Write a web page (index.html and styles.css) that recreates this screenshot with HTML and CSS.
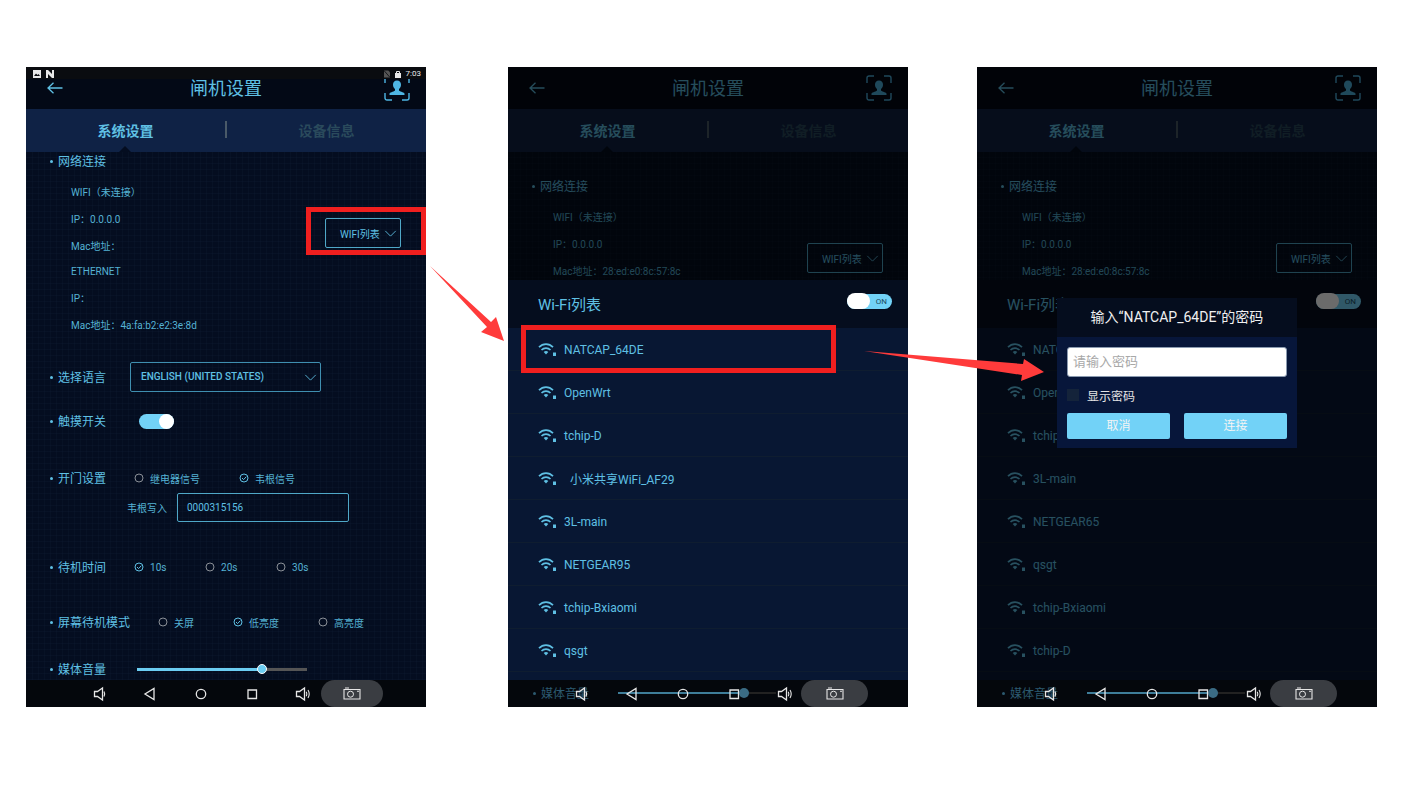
FILE: index.html
```html
<!DOCTYPE html>
<html lang="en">
<head>
  <meta charset="UTF-8">
  <title>闸机设置</title>
  <link rel="stylesheet" href="styles.css">
</head>
<body>

<!-- shared icons -->
<svg class="sprite" width="0" height="0">
  <symbol id="i-back" viewBox="0 0 16 12">
    <path d="M15.5 6H1M6.5 .8 1 6l5.5 5.2" fill="none" stroke="currentColor" stroke-width="1.3"/>
  </symbol>
  <symbol id="i-face" viewBox="0 0 26 26">
    <path d="M1 8V3a2 2 0 0 1 2-2h5M18 1h5a2 2 0 0 1 2 2v5M25 18v5a2 2 0 0 1-2 2h-5M8 25H3a2 2 0 0 1-2-2v-5" fill="none" stroke="currentColor" stroke-width="1.4"/>
    <path d="M13 5.500c2.600 0 4 1.900 4 4.200 0 2-.9 3.500-2 4.400v1.300c0 .8 4.800 1.500 5.500 3.100v1.500h-15v-1.500c.7-1.600 5.500-2.300 5.500-3.100v-1.300c-1.100-.9-2-2.400-2-4.400 0-2.300 1.400-4.200 4-4.200z" fill="currentColor"/>
  </symbol>
  <symbol id="i-chev" viewBox="0 0 14 8">
    <path d="M1 1l6 6 6-6" fill="none" stroke="currentColor" stroke-width="1"/>
  </symbol>
  <symbol id="i-wifi" viewBox="0 0 18 14">
    <path d="M1 5.200C5 1 11 1 15 5.200M3.500 8C6 5.600 10 5.600 12.500 8" fill="none" stroke="currentColor" stroke-width="1.700"/>
    <path d="M5.700 10c1.500-1.300 3.100-1.300 4.600 0L8 12.600z" fill="currentColor"/>
    <path d="M15 10.500h3V14h-3z" fill="currentColor"/>
  </symbol>
  <symbol id="i-off" viewBox="0 0 10 10">
    <circle cx="5" cy="5" r="4" fill="none" stroke="currentColor"/>
  </symbol>
  <symbol id="i-on" viewBox="0 0 10 10">
    <circle cx="5" cy="5" r="4" fill="none" stroke="currentColor"/>
    <path d="M3 5l1.600 1.600L7.300 3.700" fill="none" stroke="currentColor"/>
  </symbol>
  <symbol id="i-vol" viewBox="0 0 18 16">
    <path d="M4.500 5.500h3l5-3.500v12l-5-3.500h-3z" fill="none" stroke="currentColor" stroke-width="1.300"/>
    <path d="M14 5.500c.8 1.500.8 3.500 0 5" fill="none" stroke="currentColor" stroke-width="1.200"/>
  </symbol>
  <symbol id="i-vol-up" viewBox="0 0 18 16">
    <path d="M2.500 5.500h3l5-3.500v12l-5-3.500h-3z" fill="none" stroke="currentColor" stroke-width="1.300"/>
    <path d="M12.300 5.800c.7 1.400.7 3 0 4.400M14 4c1.500 2.500 1.500 5.500 0 8" fill="none" stroke="currentColor" stroke-width="1.100"/>
  </symbol>
  <symbol id="i-nav-back" viewBox="0 0 18 16">
    <path d="M13 2.500v11L4 8z" fill="none" stroke="currentColor" stroke-width="1.300"/>
  </symbol>
  <symbol id="i-nav-home" viewBox="0 0 18 16">
    <circle cx="9" cy="8" r="4.700" fill="none" stroke="currentColor" stroke-width="1.300"/>
  </symbol>
  <symbol id="i-nav-recent" viewBox="0 0 18 16">
    <path d="M5 4h8.500v8.500H5z" fill="none" stroke="currentColor" stroke-width="1.300"/>
  </symbol>
  <symbol id="i-shot" viewBox="0 0 18 13">
    <path d="M1 2.500h16v9.500H1z" fill="none" stroke="currentColor" stroke-width="1.100"/>
    <circle cx="7.500" cy="7.200" r="3" fill="none" stroke="currentColor"/>
    <path d="M2 1h4M14 4.200h2" stroke="currentColor" stroke-width="1.100"/>
  </symbol>
  <symbol id="i-pic" viewBox="0 0 8 8">
    <path d="M0 0h8v8H0z" fill="currentColor"/>
    <path d="M1 6l2-2.500L4.500 5 5.500 4 7 6z" fill="#0a0c10"/>
  </symbol>
  <symbol id="i-n" viewBox="0 0 8 8">
    <path d="M0 0h2l4 4V0h2v8H6L2 4v4H0z" fill="currentColor"/>
  </symbol>
  <symbol id="i-lock" viewBox="0 0 6 8">
    <path d="M0 3h6v5H0z" fill="currentColor"/>
    <path d="M1.500 3V1.500h3V3" fill="none" stroke="currentColor"/>
  </symbol>
  <symbol id="i-sim" viewBox="0 0 7 8">
    <path d="M0 0h5l2 2v6H0z" fill="currentColor"/>
    <path d="M0 0l7 8" stroke="#0a0c10"/>
  </symbol>
</svg>

<main class="screens">

  <!-- settings page -->
  <section class="phone">
    <div class="statusbar">
      <div class="status-left">
        <svg class="status-icon"><use href="#i-pic"/></svg>
        <svg class="status-icon"><use href="#i-n"/></svg>
      </div>
      <div class="status-right">
        <svg class="status-icon status-icon--sim"><use href="#i-sim"/></svg>
        <svg class="status-icon status-icon--lock"><use href="#i-lock"/></svg>
        <span>7:03</span>
      </div>
    </div>
    <header class="appbar">
      <svg class="appbar-back"><use href="#i-back"/></svg>
      <h1 class="appbar-title">闸机设置</h1>
      <svg class="appbar-face"><use href="#i-face"/></svg>
    </header>
    <nav class="tabs">
      <span class="tab tab--active">系统设置</span>
      <span class="tab-sep"></span>
      <span class="tab">设备信息</span>
    </nav>
    <div class="content">
      <div class="label">网络连接</div>
      <div class="network">
        <div class="details">
          <div class="detail-group">
            <div class="detail">WIFI（未连接）</div>
            <div class="detail">IP：0.0.0.0</div>
            <div class="detail">Mac地址：</div>
          </div>
          <div class="detail-group">
            <div class="detail">ETHERNET</div>
            <div class="detail">IP：</div>
            <div class="detail">Mac地址：4a:fa:b2:e2:3e:8d</div>
          </div>
        </div>
        <div class="wifi-btn">WIFI列表<svg class="chev"><use href="#i-chev"/></svg></div>
      </div>

      <div class="row row--lang">
        <div class="label">选择语言</div>
        <div class="select">ENGLISH (UNITED STATES)<svg class="chev chev--select"><use href="#i-chev"/></svg></div>
      </div>

      <div class="row row--touch">
        <div class="label">触摸开关</div>
        <div class="toggle"><span class="toggle-knob"></span></div>
      </div>

      <div class="row row--door">
        <div class="label">开门设置</div>
        <div class="radio radio--door"><svg class="radio-icon radio-icon--off"><use href="#i-off"/></svg>继电器信号</div>
        <div class="radio"><svg class="radio-icon"><use href="#i-on"/></svg>韦根信号</div>
      </div>
      <div class="wiegand">
        <span class="wiegand-label">韦根写入</span>
        <div class="wiegand-input">0000315156</div>
      </div>

      <div class="row row--time">
        <div class="label">待机时间</div>
        <div class="radio radio--time"><svg class="radio-icon"><use href="#i-on"/></svg>10s</div>
        <div class="radio radio--time"><svg class="radio-icon radio-icon--off"><use href="#i-off"/></svg>20s</div>
        <div class="radio radio--time"><svg class="radio-icon radio-icon--off"><use href="#i-off"/></svg>30s</div>
      </div>

      <div class="row row--mode">
        <div class="label">屏幕待机模式</div>
        <div class="radio radio--mode"><svg class="radio-icon radio-icon--off"><use href="#i-off"/></svg>关屏</div>
        <div class="radio radio--mode-wide"><svg class="radio-icon"><use href="#i-on"/></svg>低亮度</div>
        <div class="radio"><svg class="radio-icon radio-icon--off"><use href="#i-off"/></svg>高亮度</div>
      </div>

      <div class="row row--volume">
        <div class="label">媒体音量</div>
        <div class="slider"><span class="slider-fill"></span><span class="slider-knob"></span></div>
      </div>
    </div>
    <footer class="navbar">
      <svg class="nav-icon"><use href="#i-vol"/></svg>
      <svg class="nav-icon"><use href="#i-nav-back"/></svg>
      <svg class="nav-icon"><use href="#i-nav-home"/></svg>
      <svg class="nav-icon"><use href="#i-nav-recent"/></svg>
      <svg class="nav-icon"><use href="#i-vol-up"/></svg>
      <div class="shot shot--narrow"><svg class="shot-icon"><use href="#i-shot"/></svg></div>
    </footer>
  </section>

  <!-- wifi list -->
  <section class="phone phone--mid">
    <header class="appbar">
      <svg class="appbar-back"><use href="#i-back"/></svg>
      <h1 class="appbar-title">闸机设置</h1>
      <svg class="appbar-face"><use href="#i-face"/></svg>
    </header>
    <nav class="tabs">
      <span class="tab tab--active">系统设置</span>
      <span class="tab-sep"></span>
      <span class="tab">设备信息</span>
    </nav>
    <div class="content content--behind">
      <div class="label">网络连接</div>
      <div class="network">
        <div class="details">
          <div class="detail-group">
            <div class="detail">WIFI（未连接）</div>
            <div class="detail">IP：0.0.0.0</div>
            <div class="detail">Mac地址：28:ed:e0:8c:57:8c</div>
          </div>
        </div>
        <div class="wifi-btn">WIFI列表<svg class="chev"><use href="#i-chev"/></svg></div>
      </div>
    </div>
    <div class="scrim"></div>
    <div class="sheet">
      <div class="sheet-head">
        <span class="sheet-title">Wi-Fi列表</span>
        <div class="switch"><span class="switch-knob"></span><span class="switch-text">ON</span></div>
      </div>
      <ul class="ap-list">
        <li class="ap"><svg class="ap-icon"><use href="#i-wifi"/></svg>NATCAP_64DE</li>
        <li class="ap"><svg class="ap-icon"><use href="#i-wifi"/></svg>OpenWrt</li>
        <li class="ap"><svg class="ap-icon"><use href="#i-wifi"/></svg>tchip-D</li>
        <li class="ap ap--indent"><svg class="ap-icon"><use href="#i-wifi"/></svg>小米共享WiFi_AF29</li>
        <li class="ap"><svg class="ap-icon"><use href="#i-wifi"/></svg>3L-main</li>
        <li class="ap"><svg class="ap-icon"><use href="#i-wifi"/></svg>NETGEAR95</li>
        <li class="ap"><svg class="ap-icon"><use href="#i-wifi"/></svg>tchip-Bxiaomi</li>
        <li class="ap"><svg class="ap-icon"><use href="#i-wifi"/></svg>qsgt</li>
      </ul>
    </div>
    <footer class="navbar">
      <div class="peek">
        <div class="label">媒体音量</div>
        <div class="slider slider--peek"><span class="slider-fill"></span><span class="slider-knob"></span></div>
      </div>
      <svg class="nav-icon"><use href="#i-vol"/></svg>
      <svg class="nav-icon"><use href="#i-nav-back"/></svg>
      <svg class="nav-icon"><use href="#i-nav-home"/></svg>
      <svg class="nav-icon"><use href="#i-nav-recent"/></svg>
      <svg class="nav-icon"><use href="#i-vol-up"/></svg>
      <div class="shot"><svg class="shot-icon"><use href="#i-shot"/></svg></div>
    </footer>
  </section>

  <!-- password dialog -->
  <section class="phone">
    <header class="appbar">
      <svg class="appbar-back"><use href="#i-back"/></svg>
      <h1 class="appbar-title">闸机设置</h1>
      <svg class="appbar-face"><use href="#i-face"/></svg>
    </header>
    <nav class="tabs">
      <span class="tab tab--active">系统设置</span>
      <span class="tab-sep"></span>
      <span class="tab">设备信息</span>
    </nav>
    <div class="content content--behind">
      <div class="label">网络连接</div>
      <div class="network">
        <div class="details">
          <div class="detail-group">
            <div class="detail">WIFI（未连接）</div>
            <div class="detail">IP：0.0.0.0</div>
            <div class="detail">Mac地址：28:ed:e0:8c:57:8c</div>
          </div>
        </div>
        <div class="wifi-btn">WIFI列表<svg class="chev"><use href="#i-chev"/></svg></div>
      </div>
    </div>
    <div class="scrim"></div>
    <div class="sheet sheet--dim">
      <div class="sheet-head">
        <span class="sheet-title">Wi-Fi列表</span>
        <div class="switch"><span class="switch-knob"></span><span class="switch-text">ON</span></div>
      </div>
      <ul class="ap-list">
        <li class="ap"><svg class="ap-icon"><use href="#i-wifi"/></svg>NATCAP_64DE</li>
        <li class="ap"><svg class="ap-icon"><use href="#i-wifi"/></svg>OpenWrt</li>
        <li class="ap"><svg class="ap-icon"><use href="#i-wifi"/></svg>tchip-D</li>
        <li class="ap"><svg class="ap-icon"><use href="#i-wifi"/></svg>3L-main</li>
        <li class="ap"><svg class="ap-icon"><use href="#i-wifi"/></svg>NETGEAR65</li>
        <li class="ap"><svg class="ap-icon"><use href="#i-wifi"/></svg>qsgt</li>
        <li class="ap"><svg class="ap-icon"><use href="#i-wifi"/></svg>tchip-Bxiaomi</li>
        <li class="ap"><svg class="ap-icon"><use href="#i-wifi"/></svg>tchip-D</li>
      </ul>
    </div>
    <div class="dialog">
      <div class="dialog-head">输入“NATCAP_64DE”的密码</div>
      <div class="dialog-body">
        <div class="pass-input">请输入密码</div>
        <div class="show-pass"><span class="checkbox"></span>显示密码</div>
        <div class="dialog-btns">
          <div class="dialog-btn">取消</div>
          <div class="dialog-btn">连接</div>
        </div>
      </div>
    </div>
    <footer class="navbar">
      <div class="peek">
        <div class="label">媒体音量</div>
        <div class="slider slider--peek"><span class="slider-fill"></span><span class="slider-knob"></span></div>
      </div>
      <svg class="nav-icon"><use href="#i-vol"/></svg>
      <svg class="nav-icon"><use href="#i-nav-back"/></svg>
      <svg class="nav-icon"><use href="#i-nav-home"/></svg>
      <svg class="nav-icon"><use href="#i-nav-recent"/></svg>
      <svg class="nav-icon"><use href="#i-vol-up"/></svg>
      <div class="shot"><svg class="shot-icon"><use href="#i-shot"/></svg></div>
    </footer>
  </section>

</main>

<!-- red callouts drawn over the screenshots -->
<svg class="callouts" viewBox="0 0 1415 785">
  <rect class="callout-box" x="308.500" y="209.500" width="115" height="43"/>
  <rect class="callout-box" x="523.500" y="327.500" width="310" height="43"/>
  <polygon class="callout-arrow" points="430,266 491,322 496,317 504,341 481,332 487,327"/>
  <polygon class="callout-arrow" points="864,351 1023,364 1024,359 1044,372 1021,381 1022,375"/>
</svg>

</body>
</html>
```

FILE: styles.css
```css
* {
  box-sizing: border-box;
}

body {
  margin: 0;
  background: #fff;
  font-family: Roboto, "Noto Sans CJK SC", sans-serif;
  color: #5fc0e4;
}

.sprite {
  position: absolute;
}

.screens {
  display: flex;
  padding: 67px 0 0 26px;
}

/* Phone frame */
.phone {
  position: relative;
  display: flex;
  flex-direction: column;
  width: 400px;
  height: 640px;
  overflow: hidden;
  background-color: #040d20;
  background-image:
    linear-gradient(rgba(90, 140, 180, .035) 1px, transparent 1px),
    linear-gradient(90deg, rgba(90, 140, 180, .035) 1px, transparent 1px);
  background-size: 6px 6px;
}

.phone--mid {
  margin: 0 69px 0 82px;
}

/* Status bar */
.statusbar {
  position: absolute;
  top: 0;
  left: 0;
  right: 0;
  height: 12px;
  display: flex;
  justify-content: space-between;
  padding: 2px 5px 0 7px;
  background: #0a0c10;
  color: #e8e8e8;
  font-size: 8px;
  line-height: 10px;
  z-index: 2;
}

.status-left, .status-right {
  display: flex;
  align-items: center;
}

.status-left {
  gap: 5px;
}

.status-icon {
  width: 8px;
  height: 8px;
}

.status-icon--sim {
  width: 6px;
  color: #555;
  margin-right: 5px;
}

.status-icon--lock {
  width: 6px;
  margin-right: 5px;
}

/* App bar */
.appbar {
  position: relative;
  flex: none;
  height: 42px;
  display: flex;
  align-items: center;
  justify-content: center;
  padding-bottom: 2px;
  background: #030916;
}

.appbar-back {
  position: absolute;
  left: 21px;
  top: 15px;
  width: 16px;
  height: 12px;
  color: #5fc0e4;
}

.appbar-title {
  margin: 0;
  font-size: 18px;
  font-weight: 400;
  color: #5fc0e4;
}

.appbar-face {
  position: absolute;
  left: 358px;
  top: 8px;
  width: 26px;
  height: 26px;
  color: #4fb6e4;
}

/* Tabs */
.tabs {
  position: relative;
  flex: none;
  height: 43px;
  display: flex;
  align-items: center;
  padding-bottom: 2px;
  background: #0f2245;
}

.tabs::after {
  content: "";
  position: absolute;
  left: 93px;
  bottom: 0;
  border: 6px solid transparent;
  border-top: 0;
  border-bottom-color: #040d20;
}

.tab {
  flex: 1;
  text-align: center;
  font-size: 14px;
  font-weight: 700;
  color: #2a4a5c;
}

.tab--active {
  color: #5fc0e4;
}

.tab-sep {
  width: 2px;
  height: 17px;
  background: #4a5a68;
}

/* Settings content */
.content {
  flex: 1;
  min-height: 0;
  padding-left: 32px;
}

.content--behind {
  padding-top: 25px;
}

.label {
  position: relative;
  top: 1px;
  flex: none;
  font-size: 12px;
  line-height: 18px;
  color: #5fc0e4;
}

.label::before {
  content: "";
  position: absolute;
  left: -8px;
  top: 7px;
  width: 3px;
  height: 3px;
  border-radius: 50%;
  background: #5fc0e4;
}

.network {
  display: flex;
  justify-content: space-between;
  margin-top: 10px;
  padding: 0 25px 0 13px;
}

.detail-group {
  display: flex;
  flex-direction: column;
  gap: 2px;
}

.detail {
  height: 25px;
  font-size: 10px;
  line-height: 25px;
  color: #55b2d4;
}

.wifi-btn {
  flex: none;
  display: flex;
  align-items: center;
  gap: 4px;
  width: 76px;
  height: 30px;
  margin-top: 38px;
  padding-left: 14px;
  border: 1px solid #4fa8c8;
  border-radius: 2px;
  font-size: 10px;
  color: #5fc0e4;
}

.chev {
  flex: none;
  width: 13px;
  height: 7px;
}

.chev--select {
  position: absolute;
  right: 3px;
  top: 11px;
}

.row {
  display: flex;
  align-items: center;
}

.row--lang {
  margin-top: 24px;
}

.select {
  position: relative;
  width: 191px;
  height: 30px;
  margin-left: 24px;
  padding-left: 10px;
  border: 1px solid #3f8fb0;
  border-radius: 2px;
  font-size: 10px;
  font-weight: 500;
  line-height: 28px;
  color: #5fc0e4;
}

.row--touch {
  height: 30px;
  margin-top: 14px;
}

.toggle {
  display: flex;
  justify-content: flex-end;
  width: 35px;
  height: 15px;
  margin-left: 33px;
  border-radius: 8px;
  background: #72d2f7;
}

.toggle-knob {
  width: 15px;
  height: 15px;
  border-radius: 50%;
  background: #fff;
}

.row--door {
  margin-top: 33px;
}

.radio {
  display: flex;
  align-items: center;
  gap: 6px;
  font-size: 10px;
  color: #55b2d4;
}

.radio-icon {
  width: 10px;
  height: 10px;
  color: #5fc0e4;
}

.radio-icon--off {
  color: #8a8f96;
}

.radio--door {
  width: 105px;
  margin-left: 28px;
}

.wiegand {
  display: flex;
  align-items: center;
  gap: 10px;
  margin-top: 6px;
  padding-left: 69px;
}

.wiegand-label {
  font-size: 10px;
  color: #55b2d4;
}

.wiegand-input {
  width: 172px;
  height: 29px;
  padding-left: 9px;
  border: 1px solid #4fa8c8;
  border-radius: 2px;
  font-size: 10px;
  line-height: 27px;
  color: #5fc0e4;
}

.row--time {
  margin-top: 36px;
}

.radio--time {
  width: 71px;
}

.radio--time:nth-child(2) {
  margin-left: 28px;
}

.row--mode {
  margin-top: 37px;
}

.radio--mode {
  width: 75px;
  margin-left: 28px;
}

.radio--mode-wide {
  width: 85px;
}

.row--volume {
  margin-top: 29px;
}

.slider {
  position: relative;
  width: 170px;
  height: 3px;
  margin-left: 31px;
  background: #555;
}

.slider-fill {
  display: block;
  width: 125px;
  height: 3px;
  background: #6bcdf2;
}

.slider-knob {
  position: absolute;
  left: 120px;
  top: -3.500px;
  width: 10px;
  height: 10px;
  border: 1.500px solid #fff;
  border-radius: 50%;
  background: #6bcdf2;
}

/* Bottom nav */
.navbar {
  position: absolute;
  left: 0;
  right: 0;
  bottom: 0;
  height: 27px;
  display: flex;
  align-items: center;
  gap: 33px;
  padding-left: 64px;
  background: #04070c;
  z-index: 3;
}

.nav-icon {
  position: relative;
  flex: none;
  width: 18px;
  height: 16px;
  color: #e6e6e6;
}

.shot {
  position: relative;
  flex: none;
  display: flex;
  align-items: center;
  justify-content: center;
  width: 67px;
  height: 27px;
  margin-left: -26px;
  border-radius: 14px;
  background: #3a3d42;
  color: #e6e6e6;
}

.shot--narrow {
  width: 62px;
  margin-left: -24px;
}

.shot-icon {
  width: 18px;
  height: 13px;
}

.peek {
  position: absolute;
  left: 33px;
  top: 4px;
  display: flex;
  align-items: center;
}

.peek .label {
  color: #2c5a70;
}

.peek .label::before {
  background: #2c5a70;
}

.slider--peek {
  width: 158px;
  height: 2px;
  margin-left: 29px;
  background: #222;
}

.slider--peek .slider-fill {
  width: 121px;
  height: 2px;
  background: #3e7d99;
}

.slider--peek .slider-knob {
  left: 121px;
  top: -4px;
  border: 0;
  background: #3a6b84;
}

/* Dimmed layer behind the sheet */
.scrim {
  position: absolute;
  inset: 0;
  background: rgba(0, 0, 0, .6);
}

/* Wi-Fi list sheet */
.sheet {
  position: absolute;
  left: 0;
  right: 0;
  top: 213px;
  bottom: 0;
}

.sheet--dim::after {
  content: "";
  position: absolute;
  inset: 0;
  background: rgba(0, 0, 0, .58);
}

.sheet-head {
  height: 48px;
  display: flex;
  align-items: center;
  justify-content: space-between;
  padding: 0 16px 2px 30px;
  background: #050d1e;
}

.sheet-title {
  font-size: 15px;
  color: #5fc0e4;
}

.switch {
  position: relative;
  width: 45px;
  height: 15px;
  margin-top: -3px;
  padding-right: 5px;
  border-radius: 8px;
  background: #72d2f7;
  text-align: right;
}

.switch-knob {
  position: absolute;
  left: 0;
  top: -1px;
  width: 23px;
  height: 16px;
  border-radius: 8px;
  background: #fff;
}

.switch-text {
  display: block;
  font-size: 8px;
  line-height: 15px;
  color: #1d4b60;
}

.ap-list {
  margin: 0;
  padding: 0;
  list-style: none;
  background: #081733;
  height: 352px;
}

.ap {
  display: flex;
  align-items: center;
  gap: 8px;
  height: 43px;
  padding: 1px 0 0 30px;
  border-bottom: 1px solid #0f1d30;
  font-size: 12px;
  color: #5fc0e4;
}

.ap--indent {
  gap: 14px;
}

.ap-icon {
  flex: none;
  width: 18px;
  height: 14px;
  margin-top: -1px;
  color: #5fc0e4;
}

/* Password dialog */
.dialog {
  position: absolute;
  left: 80px;
  top: 231px;
  width: 240px;
  height: 150px;
  display: flex;
  flex-direction: column;
  background: #07163a;
}

.dialog-head {
  height: 39px;
  background: #050d1e;
  font-size: 14px;
  line-height: 39px;
  text-align: center;
  color: #f0f0f0;
}

.dialog-body {
  padding: 10px 10px 0;
}

.pass-input {
  height: 30px;
  padding-left: 5px;
  border: 1px solid #8a9ab0;
  border-radius: 3px;
  background: #fff;
  font-size: 13px;
  line-height: 28px;
  color: #a8a8a8;
}

.show-pass {
  display: flex;
  align-items: center;
  gap: 8px;
  height: 12px;
  margin-top: 12px;
  font-size: 12px;
  color: #e4e4e4;
}

.checkbox {
  width: 12px;
  height: 12px;
  background: #14233a;
}

.dialog-btns {
  display: flex;
  justify-content: space-between;
  margin-top: 12px;
}

.dialog-btn {
  width: 103px;
  height: 26px;
  border-radius: 2px;
  background: #72d2f7;
  font-size: 12px;
  line-height: 26px;
  text-align: center;
  color: #f4f4f4;
}

/* Red callouts */
.callouts {
  position: absolute;
  left: 0;
  top: 0;
  width: 1415px;
  height: 785px;
  z-index: 5;
}

.callout-box {
  fill: none;
  stroke: #f01f1f;
  stroke-width: 5;
}

.callout-arrow {
  fill: #ff3b3b;
}
```
